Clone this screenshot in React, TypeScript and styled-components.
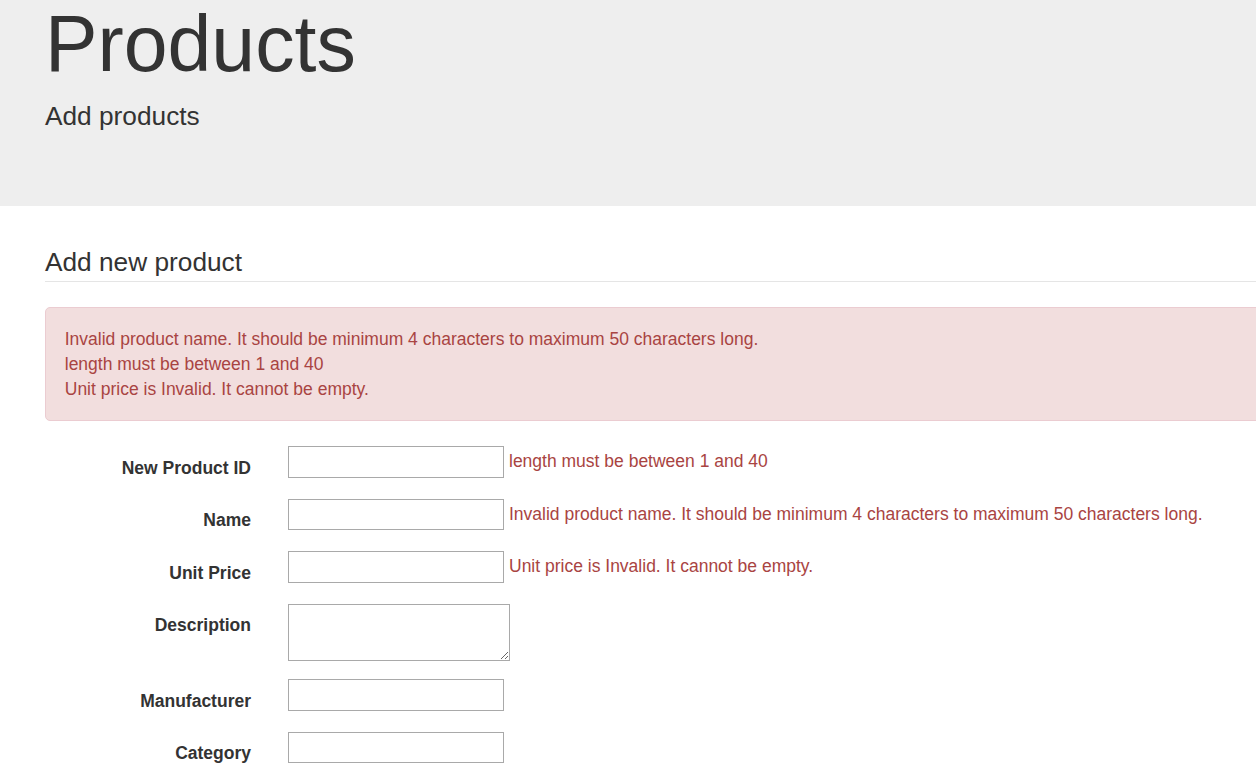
import React from 'react';
import styled, { createGlobalStyle } from 'styled-components';

const GlobalStyle = createGlobalStyle`
  html, body {
    margin: 0;
    padding: 0;
    overflow-x: hidden;
  }
  body {
    font-family: "Liberation Sans", Helvetica, Arial, sans-serif;
    font-size: 17.5px;
    line-height: 1.42857;
    color: #333;
    background: #fff;
  }
  * {
    box-sizing: border-box;
  }
`;

const Page = styled.div`
  width: 100%;
  overflow: hidden;
`;

const Jumbotron = styled.div`
  background: #eee;
  padding: 1px 0 70.5px;
  margin-bottom: 37.5px;
`;

const Container = styled.div`
  width: 1468px;
  padding-left: 45px;
`;

const Title = styled.h1`
  margin: 0;
  font-size: 78.75px;
  line-height: 1.1;
  font-weight: 400;
  color: #333;
`;

const Lead = styled.p`
  margin: 10px 0 0;
  font-size: 26.25px;
  line-height: 37.5px;
  font-weight: 400;
`;

const Legend = styled.div`
  font-size: 26.25px;
  line-height: 36.5px;
  padding-top: 1px;
  border-bottom: 1px solid #e5e5e5;
  margin-bottom: 25px;
`;

const Alert = styled.div`
  padding: 19.5px 18.75px 18px;
  border: 1px solid #ebccd1;
  border-radius: 5px;
  background: #f2dede;
  color: #a94442;
  margin-bottom: 25px;
  line-height: 25px;
`;

const FormGroup = styled.div`
  display: grid;
  grid-template-columns: 206px 1fr;
  column-gap: 37px;
  margin-bottom: 18.75px;
`;

const Label = styled.label`
  text-align: right;
  font-weight: 700;
  padding-top: 9.5px;
  line-height: 24.25px;
`;

const Field = styled.div`
  display: flex;
  align-items: flex-start;
  gap: 5px;
`;

const TextInput = styled.input`
  width: 216px;
  height: 31.5px;
  border: 1px solid #a9a9a9;
  padding: 1px 2px;
  font: inherit;
  background: #fff;
  margin: 0;
`;

const TextArea = styled.textarea`
  width: 222px;
  height: 57px;
  border: 1px solid #a9a9a9;
  padding: 2px;
  font: inherit;
  background: #fff;
  margin: 0;
  display: block;
`;

const ErrorText = styled.span`
  color: #a94442;
  line-height: 25px;
  margin-top: 3.25px;
  white-space: nowrap;
`;

interface RowProps {
  label: string;
  id: string;
  error?: string;
  multiline?: boolean;
}

const Row: React.FC<RowProps> = ({ label, id, error, multiline }) => (
  <FormGroup>
    <Label htmlFor={id}>{label}</Label>
    <Field>
      {multiline ? <TextArea id={id} /> : <TextInput id={id} type="text" />}
      {error && <ErrorText>{error}</ErrorText>}
    </Field>
  </FormGroup>
);

const errors = {
  name: 'Invalid product name. It should be minimum 4 characters to maximum 50 characters long.',
  id: 'length must be between 1 and 40',
  price: 'Unit price is Invalid. It cannot be empty.',
};

const App: React.FC = () => (
  <Page>
    <GlobalStyle />
    <Jumbotron>
      <Container>
        <Title>Products</Title>
        <Lead>Add products</Lead>
      </Container>
    </Jumbotron>
    <Container>
      <Legend>Add new product</Legend>
      <Alert>
        <div>{errors.name}</div>
        <div>{errors.id}</div>
        <div>{errors.price}</div>
      </Alert>
      <Row label="New Product ID" id="productId" error={errors.id} />
      <Row label="Name" id="name" error={errors.name} />
      <Row label="Unit Price" id="unitPrice" error={errors.price} />
      <Row label="Description" id="description" multiline />
      <Row label="Manufacturer" id="manufacturer" />
      <Row label="Category" id="category" />
    </Container>
  </Page>
);

export default App;
